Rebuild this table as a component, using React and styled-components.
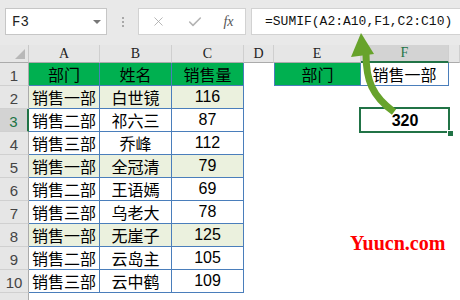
import React from "react";
import styled, { createGlobalStyle } from "styled-components";
import { X, Check } from "lucide-react";

const GlobalStyle = createGlobalStyle`
  html, body {
    margin: 0;
    padding: 0;
    background: #ffffff;
    overflow: hidden;
  }
`;

const Window = styled.div`
  position: relative;
  width: 460px;
  height: 300px;
  overflow: hidden;
  background: #ffffff;
  font-family: "Liberation Sans", Arial, sans-serif;
`;

const Toolbar = styled.div`
  display: flex;
  align-items: flex-start;
  height: 45px;
  box-sizing: border-box;
  padding: 8px 0 0 5px;
  background: #e9e9e9;
`;

const NameBox = styled.div`
  position: relative;
  width: 102px;
  height: 27px;
  box-sizing: border-box;
  border: 1px solid #c6c6c6;
  background: #ffffff;
  display: flex;
  align-items: center;
  padding-left: 6px;
  font-family: "Liberation Mono", monospace;
  font-size: 14px;
  color: #222;
`;

const DropArrow = styled.span`
  position: absolute;
  right: 5px;
  top: 11px;
  width: 0;
  height: 0;
  border-left: 4px solid transparent;
  border-right: 4px solid transparent;
  border-top: 4px solid #777;
`;

const Grip = styled.div`
  width: 31px;
  height: 27px;
  display: flex;
  flex-direction: column;
  align-items: center;
  justify-content: center;
  gap: 2px;
`;

const GripDot = styled.span`
  width: 2px;
  height: 2px;
  background: #a8a8a8;
`;

const ButtonBox = styled.div`
  width: 108px;
  height: 27px;
  box-sizing: border-box;
  border: 1px solid #d2d2d2;
  background: #ffffff;
  display: grid;
  grid-template-columns: 38px 35px 1fr;
  align-items: center;
  justify-items: center;
  margin-right: 5px;
`;

const FxLabel = styled.span`
  font-family: "Liberation Serif", serif;
  font-style: italic;
  font-size: 14px;
  color: #555;
`;

const FormulaBox = styled.div`
  flex: 1;
  height: 27px;
  margin-right: -2px;
  box-sizing: border-box;
  border: 1px solid #d2d2d2;
  background: #ffffff;
  display: flex;
  align-items: center;
  padding-left: 13px;
  font-family: "Liberation Mono", monospace;
  font-size: 13px;
  color: #111;
  white-space: nowrap;
`;

const Sheet = styled.div`
  display: grid;
  grid-template-columns: 29px 71px 72px 72px 30px 87px 88px 1fr;
  grid-template-rows: 18px repeat(11, 23px);
`;

const Corner = styled.div`
  position: relative;
  background: #e6e6e6;
  border-right: 1px solid #c8c8c8;
  border-bottom: 1px solid #ababab;
  box-sizing: border-box;

  &::after {
    content: "";
    position: absolute;
    right: 3px;
    bottom: 3px;
    width: 0;
    height: 0;
    border-left: 10px solid transparent;
    border-bottom: 10px solid #b8b8b8;
  }
`;

const ColHead = styled.div`
  box-sizing: border-box;
  background: ${(p) => (p.$active ? "#d3d3d3" : "#e6e6e6")};
  border-right: 1px solid #cfcfcf;
  border-bottom: ${(p) => (p.$active ? "2px solid #217346" : "1px solid #ababab")};
  display: flex;
  align-items: center;
  justify-content: center;
  font-family: "Liberation Serif", serif;
  font-size: 14px;
  color: ${(p) => (p.$active ? "#217346" : "#222")};
`;

const RowHead = styled.div`
  box-sizing: border-box;
  background: ${(p) => (p.$active ? "#d3d3d3" : "#e6e6e6")};
  border-right: ${(p) => (p.$active ? "2px solid #217346" : "1px solid #ababab")};
  border-bottom: 1px solid #d0d0d0;
  display: flex;
  align-items: flex-end;
  justify-content: center;
  padding-bottom: 1px;
  font-size: 15px;
  color: ${(p) => (p.$active ? "#217346" : "#444")};
`;

const Cell = styled.div`
  position: relative;
  box-sizing: border-box;
  background: ${(p) => p.$bg || "#ffffff"};
  border-right: ${(p) => (p.$boxed ? "1px solid #4a7ebb" : "none")};
  border-bottom: ${(p) => (p.$boxed ? "1px solid #4a7ebb" : "none")};
  border-left: ${(p) => (p.$left ? "1px solid #4a7ebb" : "none")};
  display: flex;
  align-items: center;
  justify-content: center;
  font-family: "Liberation Sans", "Noto Sans CJK SC", sans-serif;
  font-size: 16px;
  font-weight: ${(p) => (p.$bold ? 700 : 400)};
  color: #000;
  white-space: nowrap;
`;

const Selected = styled(Cell)`
  z-index: 1;

  &::before {
    content: "";
    position: absolute;
    left: -2px;
    top: -2px;
    right: -1px;
    bottom: -1px;
    border: 2px solid #217346;
    pointer-events: none;
  }

  &::after {
    content: "";
    position: absolute;
    right: -4px;
    bottom: -4px;
    width: 5px;
    height: 5px;
    background: #217346;
    border-left: 1px solid #ffffff;
    border-top: 1px solid #ffffff;
  }
`;

const Overlay = styled.svg`
  position: absolute;
  left: 0;
  top: 0;
  z-index: 2;
  pointer-events: none;
`;

const Watermark = styled.div`
  position: absolute;
  left: 350px;
  top: 232px;
  font-family: "Liberation Serif", serif;
  font-weight: 700;
  font-size: 20px;
  color: #ff0000;
`;

const GREEN = "#00b050";
const SHADE = "#ebf1de";

const data = [
  ["销售一部", "白世镜", 116],
  ["销售二部", "祁六三", 87],
  ["销售三部", "乔峰", 112],
  ["销售一部", "全冠清", 79],
  ["销售二部", "王语嫣", 69],
  ["销售三部", "乌老大", 78],
  ["销售一部", "无崖子", 125],
  ["销售二部", "云岛主", 105],
  ["销售三部", "云中鹤", 109],
];

const columns = ["A", "B", "C", "D", "E", "F", ""];

function extraCells(rowNo) {
  if (rowNo === 1) {
    return [
      <Cell key="d" />,
      <Cell key="e" $boxed $left $bg={GREEN}>部门</Cell>,
      <Cell key="f" $boxed>销售一部</Cell>,
      <Cell key="g" />,
    ];
  }
  if (rowNo === 3) {
    return [
      <Cell key="d" />,
      <Cell key="e" />,
      <Selected key="f" $bold>320</Selected>,
      <Cell key="g" />,
    ];
  }
  return [<Cell key="d" />, <Cell key="e" />, <Cell key="f" />, <Cell key="g" />];
}

export default function App() {
  return (
    <Window>
      <GlobalStyle />
      <Toolbar>
        <NameBox>
          F3
          <DropArrow />
        </NameBox>
        <Grip>
          <GripDot />
          <GripDot />
          <GripDot />
        </Grip>
        <ButtonBox>
          <X size={15} strokeWidth={1.3} color="#a6a6a6" />
          <Check size={16} strokeWidth={2.4} color="#b4b4b4" />
          <FxLabel>fx</FxLabel>
        </ButtonBox>
        <FormulaBox>=SUMIF(A2:A10,F1,C2:C10)</FormulaBox>
      </Toolbar>

      <Sheet>
        <Corner />
        {columns.map((c) => (
          <ColHead key={c || "g"} $active={c === "F"}>
            {c}
          </ColHead>
        ))}

        <RowHead>1</RowHead>
        <Cell $boxed $bg={GREEN}>部门</Cell>
        <Cell $boxed $bg={GREEN}>姓名</Cell>
        <Cell $boxed $bg={GREEN}>销售量</Cell>
        {extraCells(1)}

        {data.map(([dept, name, qty], i) => {
          const rowNo = i + 2;
          const bg = i % 3 === 0 ? SHADE : "#ffffff";
          return (
            <React.Fragment key={rowNo}>
              <RowHead $active={rowNo === 3}>{rowNo}</RowHead>
              <Cell $boxed $bg={bg}>{dept}</Cell>
              <Cell $boxed $bg={bg}>{name}</Cell>
              <Cell $boxed $bg={bg}>{qty}</Cell>
              {extraCells(rowNo)}
            </React.Fragment>
          );
        })}

        <RowHead>11</RowHead>
      </Sheet>

      <Overlay width="460" height="300" viewBox="0 0 460 300">
        <path
          d="M366 54 C366 80 372 96 394 112"
          fill="none"
          stroke="#67a32b"
          strokeWidth="7"
        />
        <polygon points="361,33 351,57 374,54" fill="#67a32b" />
      </Overlay>

      <Watermark>Yuucn.com</Watermark>
    </Window>
  );
}
